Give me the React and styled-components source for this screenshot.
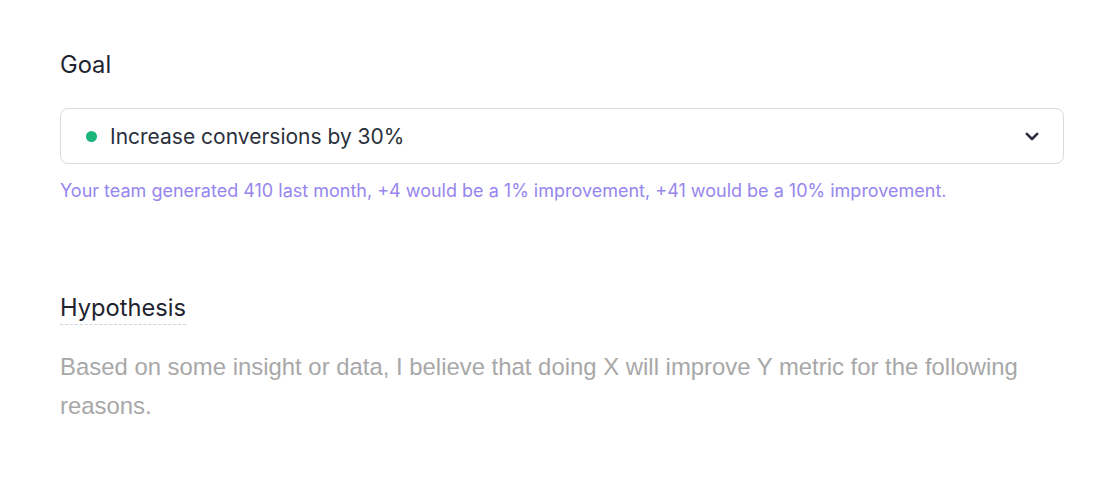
import React from "react";
import styled, { createGlobalStyle } from "styled-components";

const Global = createGlobalStyle`
  html, body { margin: 0; padding: 0; background: #ffffff; }
  body { font-family: Inter, "Noto Sans", sans-serif; }
`;

const Page = styled.div`
  width: 1004px;
  padding: 50px 56px 0 60px;
  display: flex;
  flex-direction: column;
`;

const Section = styled.section`
  display: flex;
  flex-direction: column;
  margin-bottom: ${(p) => p.$gap || 0}px;
`;

const Label = styled.div`
  font-family: Inter, sans-serif;
  font-size: 23.7px;
  line-height: 30px;
  color: #1f2430;
  align-self: flex-start;
  margin-bottom: ${(p) => p.$mb || 0}px;
  border-bottom: ${(p) => (p.$dashed ? "1.5px dashed #cfd3d9" : "none")};
  padding-bottom: ${(p) => (p.$dashed ? 1 : 0)}px;
`;

const Select = styled.button`
  box-sizing: border-box;
  width: 100%;
  height: 56px;
  border: 1px solid #d8dbe0;
  border-radius: 8px;
  background: #fff;
  display: flex;
  align-items: center;
  padding: 0 24px 0 25px;
  gap: 13px;
  cursor: pointer;
  font-family: Inter, sans-serif;
`;

const Dot = styled.span`
  width: 11px;
  height: 11px;
  border-radius: 50%;
  background: ${(p) => p.$color};
  flex: none;
`;

const Value = styled.span`
  flex: 1;
  text-align: left;
  font-size: 21px;
  color: #2b313c;
`;

const Help = styled.p`
  margin: 15px 0 0;
  font-family: Inter, sans-serif;
  font-size: 18px;
  line-height: 24px;
  color: #9686ee;
`;

const Placeholder = styled.p`
  margin: 0;
  font-family: "Liberation Sans", Arial, sans-serif;
  font-size: 23.9px;
  line-height: 39px;
  color: #a8a8a8;
`;

const Chevron = () => (
  <svg width="14" height="9" viewBox="0 0 14 9" fill="none">
    <path d="M1.8 1.8 L7 7 L12.2 1.8" stroke="#2b313c" strokeWidth="2.6" strokeLinecap="round" strokeLinejoin="round" />
  </svg>
);

export default function App() {
  return (
    <>
      <Global />
      <Page>
        <Section $gap={90}>
          <Label $mb={28}>Goal</Label>
          <Select type="button">
            <Dot $color="#1bb57c" />
            <Value>Increase conversions by 30%</Value>
            <Chevron />
          </Select>
          <Help>
            Your team generated 410 last month, +4 would be a 1% improvement, +41 would be a 10% improvement.
          </Help>
        </Section>
        <Section>
          <Label $dashed $mb={22}>Hypothesis</Label>
          <Placeholder>
            Based on some insight or data, I believe that doing X will improve Y metric for the following reasons.
          </Placeholder>
        </Section>
      </Page>
    </>
  );
}
